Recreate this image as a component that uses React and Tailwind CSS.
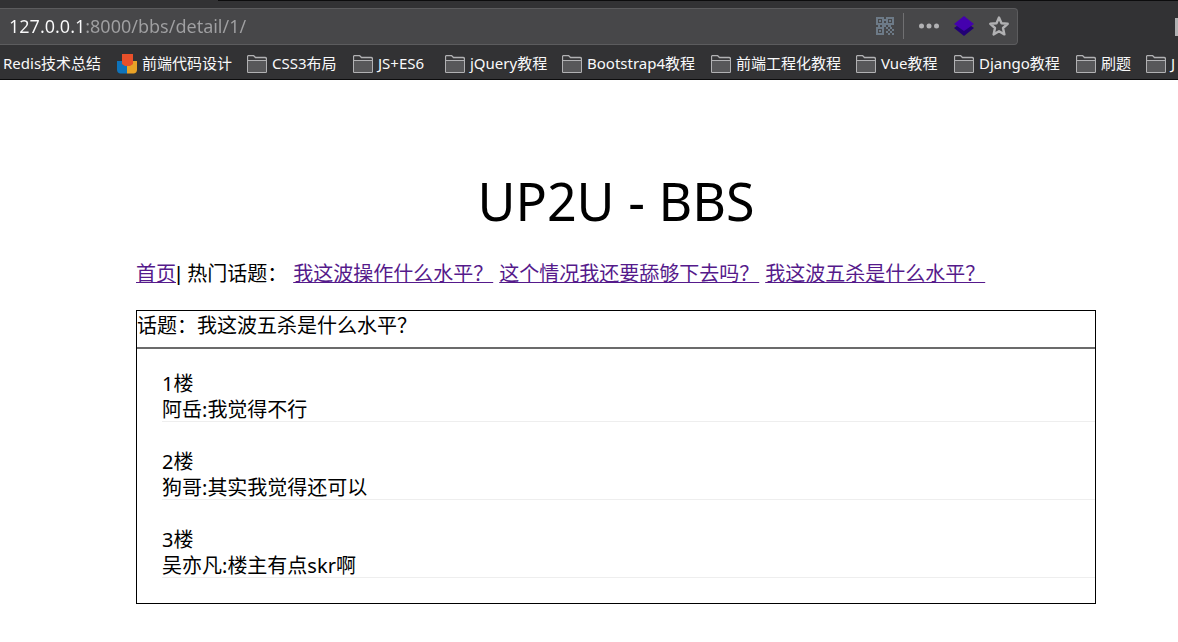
const bookmarks = [
  { label: "Redis技术总结", icon: "none", box: "w-[99px]" },
  { label: "前端代码设计", icon: "design", box: "w-[90px]" },
  { label: "CSS3布局", icon: "folder", box: "w-[66px]" },
  { label: "JS+ES6", icon: "folder", box: "w-[52px]" },
  { label: "jQuery教程", icon: "folder", box: "w-[77px]" },
  { label: "Bootstrap4教程", icon: "folder", box: "w-[109px]" },
  { label: "前端工程化教程", icon: "folder", box: "w-[105px]" },
  { label: "Vue教程", icon: "folder", box: "w-[58px]" },
  { label: "Django教程", icon: "folder", box: "w-[82px]" },
  { label: "刷题", icon: "folder", box: "w-[30px]" },
  { label: "J", icon: "folder", box: "w-2" },
];

const hotTopics = ["我这波操作什么水平？", "这个情况我还要舔够下去吗？", "我这波五杀是什么水平？"];

const replies = [
  { floor: 1, author: "阿岳", text: "我觉得不行" },
  { floor: 2, author: "狗哥", text: "其实我觉得还可以" },
  { floor: 3, author: "吴亦凡", text: "楼主有点skr啊" },
];

function FolderIcon() {
  return (
    <svg viewBox="0 0 20 18" className="h-[18px] w-5 shrink-0" fill="none" aria-hidden="true">
      <path d="M.5 16.5V2Q.5.5 2 .5H6.5L8.5 2.5H18Q19.5 2.5 19.5 4V16Q19.5 17.5 18 17.5H2Q.5 17.5.5 16.5Z" fill="#38383a" stroke="#b1b1b3" strokeWidth="1.3" />
      <path d="M1 6H19V17H1Z" fill="#58585a" />
      <path d="M1 5.5H19" stroke="#b1b1b3" />
    </svg>
  );
}

function DesignIcon() {
  return (
    <svg viewBox="0 0 20 20" className="h-5 w-5 shrink-0" aria-hidden="true">
      <path d="M0 7H10V19.5H3Q0 19 0 15.5Z" fill="#0e73ba" />
      <path d="M10 7H20V15.5Q20 19 17 19.5H10Z" fill="#e9a227" />
      <path d="M5 0H16V10L13 12H8L5 10Z" fill="#e8502a" />
    </svg>
  );
}

function QrIcon() {
  return (
    <svg viewBox="0 0 18 18" className="h-[18px] w-[18px]" fill="none" stroke="#6d7a87" strokeWidth="2" aria-hidden="true">
      <path d="M1 1h6v6H1zM11 1h6v6h-6zM1 11h6v6H1z" />
      <path d="M3 4h2M13 4h2M3 14h2M8 3h2M7 7h4M3 8v2M7 8v2M14 8v2" />
      <path d="M10 11h2M14 11h2M12 13h2M16 13h2M10 15h2M14 15h2M12 17h2M16 17h2M8 9h2M12 9h2" />
    </svg>
  );
}

export default function App() {
  return (
    <div className="min-h-screen overflow-x-hidden bg-white font-['Noto_Sans','Noto_Sans_CJK_SC',sans-serif] text-black">
      <header className="border-b border-[#0c0c0d] bg-[#323234]">
        <div className="ml-[218px] h-px bg-[#0c0c0d]" />
        <div className="flex h-[51px] items-center">
          <div className="flex h-[37px] w-[1018px] shrink-0 items-center rounded-r-sm border border-l-0 border-[#5c5c5e] bg-[#474749]">
            <input
              type="text"
              aria-label="地址"
              defaultValue="127.0.0.1:8000/bbs/detail/1/"
              className="min-w-0 flex-1 bg-[linear-gradient(to_right,#f9f9fa_85px,#a0a0a2_85px)] bg-clip-text pb-0.5 pl-[9px] text-lg text-transparent outline-none"
            />
            <div className="flex items-center pb-0.5">
              <button type="button" aria-label="二维码" className="pr-[9px]">
                <QrIcon />
              </button>
              <div className="h-[26px] w-px bg-[#707072]" />
              <button type="button" aria-label="页面操作" className="pl-[15px]">
                <svg viewBox="0 0 20 20" className="h-5 w-5" fill="#b1b1b3" aria-hidden="true">
                  <circle cx="2.5" cy="10" r="2.5" />
                  <circle cx="10" cy="10" r="2.5" />
                  <circle cx="17.5" cy="10" r="2.5" />
                </svg>
              </button>
              <button type="button" aria-label="图层扩展" className="pl-[15px]">
                <svg viewBox="0 0 20 20" className="h-5 w-5" aria-hidden="true">
                  <path d="M0 12L10 5L20 12L10 20Z" fill="#220075" />
                  <path d="M10 0L20 8L10 15L0 8Z" fill="#4400ae" />
                </svg>
              </button>
              <button type="button" aria-label="收藏" className="pr-2 pl-[15px]">
                <svg viewBox="0 0 20 20" className="h-5 w-5" fill="none" stroke="#b1b1b3" strokeWidth="2.4" strokeLinejoin="round" aria-hidden="true">
                  <path d="M10 1.5L12.5 7.2L18.7 7.8L14 12L15.4 18.4L10 15.2L4.6 18.4L6 12L1.3 7.8L7.5 7.2Z" />
                </svg>
              </button>
            </div>
          </div>
          <div className="flex-1" />
          <div className="h-[18px] w-[3px] bg-[#b1b1b3]" />
        </div>
        <nav aria-label="书签" className="flex h-[27px] items-start gap-[15px] overflow-hidden pl-[3px]">
          {bookmarks.map((b) => (
            <a key={b.label} href="#" className="flex h-6 shrink-0 items-center gap-[5px] text-[15px] leading-[22px] whitespace-nowrap text-[#f9f9fa]">
              {b.icon === "folder" && <FolderIcon />}
              {b.icon === "design" && <DesignIcon />}
              <span className={`${b.box} pb-0.5`}>{b.label}</span>
            </a>
          ))}
        </nav>
      </header>

      <main className="pl-[54px]">
        <div className="mx-auto max-w-[960px] text-xl leading-[26px]">
          <h1 className="pt-[86px] text-center text-[52px] leading-[70px]">UP2U - BBS</h1>
          <div className="flex flex-wrap items-center pt-[25px]">
            <a href="#" className="text-[#551a8b] underline decoration-1">首页</a>
            <span className="font-['Liberation_Sans',sans-serif]">|</span>
            <span className="px-[6px]">热门话题：</span>
            <div className="flex gap-[6px]">
              {hotTopics.map((t) => (
                <a key={t} href="#" className="text-[#551a8b] underline decoration-1">{t}</a>
              ))}
            </div>
          </div>
          <section className="mt-[23px] border border-black">
            <h2 className="h-[38px] border-b-2 border-[#6b6b6b] pt-0.5">话题：我这波五杀是什么水平？</h2>
            <ol className="flex flex-col gap-[27px] pt-[22px] pb-[25px] pl-[25px]">
              {replies.map((r) => (
                <li key={r.floor} className="h-[51px] border-b border-[#eeeeee]">
                  <p>{r.floor}楼</p>
                  <p>{r.author}:{r.text}</p>
                </li>
              ))}
            </ol>
          </section>
        </div>
      </main>
    </div>
  );
}
